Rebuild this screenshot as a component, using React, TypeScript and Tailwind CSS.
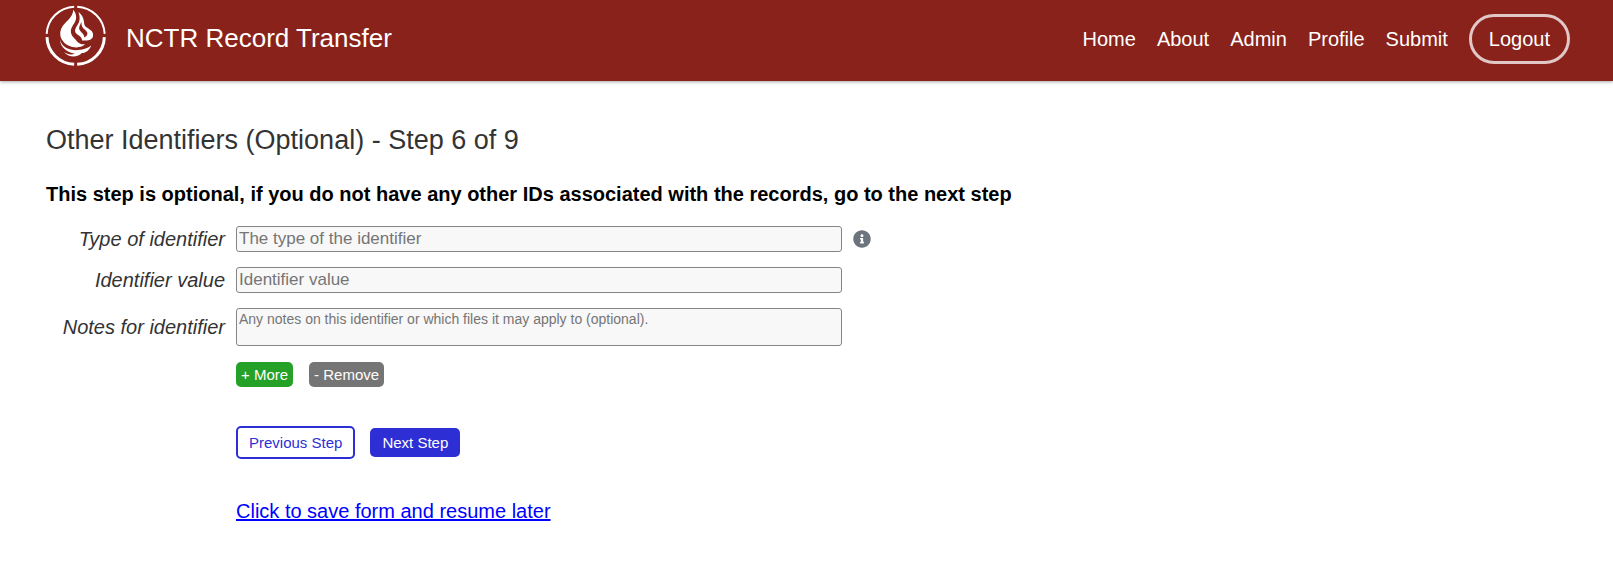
import type { ReactNode } from "react";
import { FaInfoCircle } from "react-icons/fa";

function Logo() {
  return (
    <svg viewBox="46 15 184 184" className="size-[61px] shrink-0" fill="none" aria-hidden="true">
      <g stroke="#fff">
        <path strokeWidth="6" d="M51 102A87 86 0 0 1 134 20M143 20A87 86 0 0 1 226 102" />
        <path strokeWidth="9" d="M52 112A86 84 0 0 0 134 194M143 194A86 84 0 0 0 225 112" />
      </g>
      <g fill="#fff">
        <path d="M131 29C131 46 118 58 107 69C91 84 88 104 97 120C107 136 124 143 141 143C153 143 162 139 168 133C157 135 148 131 142 124C134 114 123 107 124 93C125 78 140 69 140 52C140 42 136 35 131 29Z" />
        <path d="M147 36C153 54 151 65 143 77C133 91 136 99 145 105C153 110 157 114 158 122C172 123 186 121 190 112C194 99 187 93 180 88C171 81 165 80 164 69C163 56 159 46 147 36ZM156 65C155 78 159 84 168 91C177 98 176 108 164 113C166 103 155 98 151 91C146 83 153 75 156 65Z" fillRule="evenodd" />
        <path d="M91 120C98 145 122 153 147 151C163 150 176 144 185 137C181 151 170 159 157 160C145 174 119 175 103 157C114 165 126 166 136 162C112 157 93 144 91 120Z" />
      </g>
    </svg>
  );
}

const links = ["Home", "About", "Admin", "Profile", "Submit"];

function FieldRow({ id, label, help, children }: { id: string; label: string; help?: boolean; children: ReactNode }) {
  return (
    <div className="flex items-center gap-[11px]">
      <label htmlFor={id} className="w-[179px] shrink-0 text-right text-[20px] leading-[24px] text-[#333] italic">
        {label}
      </label>
      <div className="flex w-full max-w-[606px] min-w-0">{children}</div>
      {help && (
        <button type="button" aria-label="Help" className="shrink-0 text-[#6c757d]">
          <FaInfoCircle className="size-[18px]" />
        </button>
      )}
    </div>
  );
}

const box = "w-full rounded-[3px] border border-[#858585] bg-[#f8f8f8] px-[2px] placeholder:text-[#757575]";

export default function App() {
  return (
    <div className="font-['Liberation_Sans',Arial,sans-serif] text-black">
      <header className="flex h-[81px] items-start justify-between bg-[#88221b] pr-[43px] pl-[45px] text-white shadow-[0_1px_3px_rgba(0,0,0,0.35)]">
        <a href="#" className="flex items-center gap-[20px] pt-[5px] text-[26px] leading-[32px]">
          <Logo />
          <span className="pt-[4px]">NCTR Record Transfer</span>
        </a>
        <nav className="flex items-center gap-[21px] pt-[14px] text-[20px] leading-[24px]">
          {links.map((name) => (
            <a key={name} href="#">
              {name}
            </a>
          ))}
          <a href="#" className="rounded-[25px] border-[3px] border-white/75 px-[17px] py-[10px]">
            Logout
          </a>
        </nav>
      </header>
      <main className="px-[46px] pt-[43px]">
        <h1 className="text-[27px] leading-[32px] text-[#333]">Other Identifiers (Optional) - Step 6 of 9</h1>
        <p className="mt-[26px] text-[20px] leading-[24px] font-bold">
          This step is optional, if you do not have any other IDs associated with the records, go to the next step
        </p>
        <form className="mt-[20px]">
          <div className="flex flex-col gap-[15px]">
            <FieldRow id="type" label="Type of identifier" help>
              <input id="type" placeholder="The type of the identifier" className={`${box} h-[26px] text-[17px]`} />
            </FieldRow>
            <FieldRow id="value" label="Identifier value">
              <input id="value" placeholder="Identifier value" className={`${box} h-[26px] text-[17px]`} />
            </FieldRow>
            <FieldRow id="notes" label="Notes for identifier">
              <textarea
                id="notes"
                placeholder="Any notes on this identifier or which files it may apply to (optional)."
                className={`${box} h-[38px] resize-none pt-[2px] text-[14px] leading-[17px]`}
              />
            </FieldRow>
          </div>
          <div className="ml-[190px] flex flex-col items-start">
            <div className="mt-[16px] flex gap-[16px] text-[15px] leading-[17px] text-white">
              <button type="button" className="rounded-[5px] bg-[#26a127] px-[5px] py-[4px]">
                + More
              </button>
              <button type="button" className="rounded-[5px] bg-[#757575] px-[5px] py-[4px]">
                - Remove
              </button>
            </div>
            <div className="mt-[39px] flex items-center gap-[15px] text-[15px] leading-[17px]">
              <button type="button" className="rounded-[5px] border-2 border-[#2d2fd5] px-[11px] py-[6px] text-[#2d2fd5]">
                Previous Step
              </button>
              <button type="submit" className="rounded-[5px] bg-[#2d2fd5] px-[12px] py-[6px] text-white">
                Next Step
              </button>
            </div>
            <a href="#" className="mt-[40px] text-[20px] leading-[24px] text-[#0000ff] underline">
              Click to save form and resume later
            </a>
          </div>
        </form>
      </main>
    </div>
  );
}
